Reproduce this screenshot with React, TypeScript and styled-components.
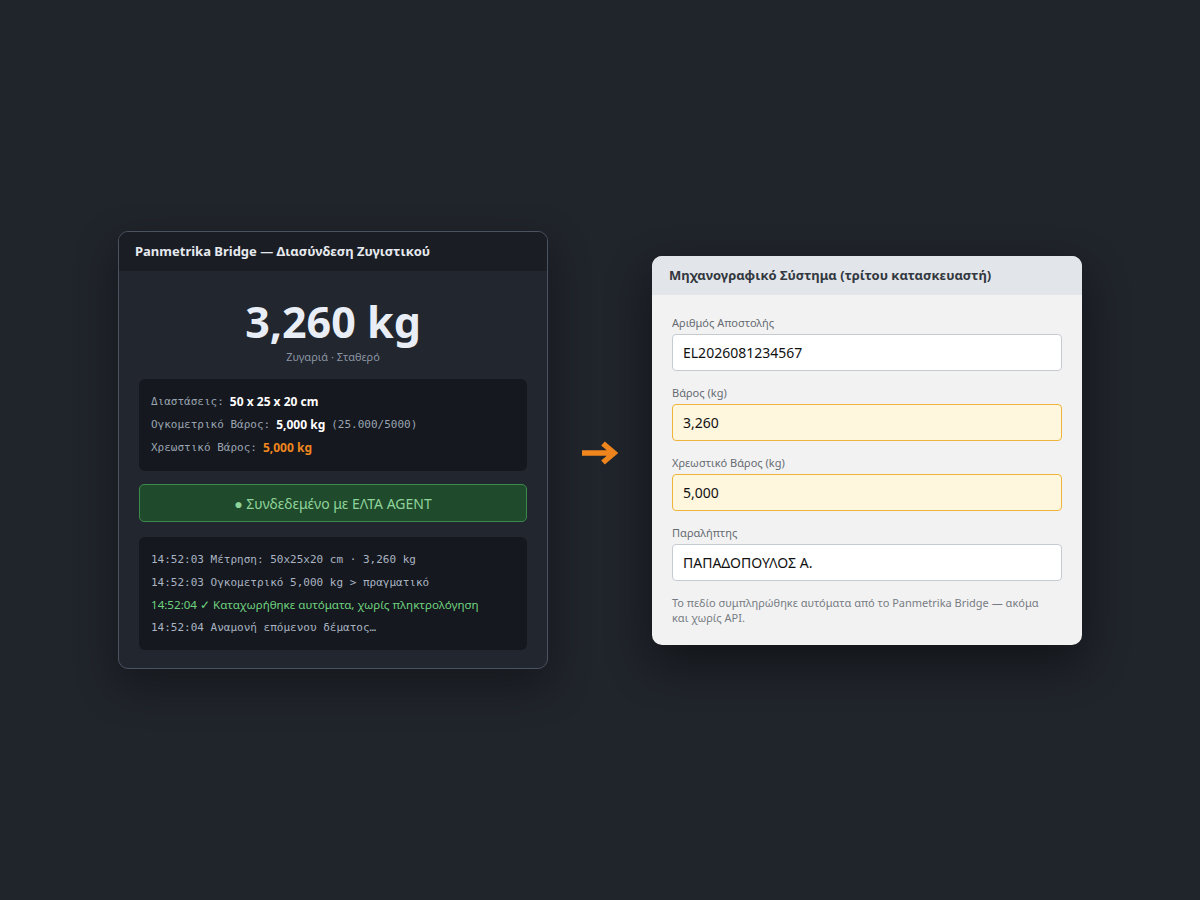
import React from "react";
import styled, { createGlobalStyle } from "styled-components";

const GlobalStyle = createGlobalStyle`
  html, body {
    margin: 0;
    padding: 0;
    background: #20242b;
  }
  body {
    font-family: "Noto Sans", "Open Sans", sans-serif;
  }
`;

type Field = {
  label: string;
  value: string;
  filled?: boolean;
};

const fields: Field[] = [
  { label: "Αριθμός Αποστολής", value: "EL2026081234567" },
  { label: "Βάρος (kg)", value: "3,260", filled: true },
  { label: "Χρεωστικό Βάρος (kg)", value: "5,000", filled: true },
  { label: "Παραλήπτης", value: "ΠΑΠΑΔΟΠΟΥΛΟΣ Α." },
];

function App() {
  return (
    <>
      <GlobalStyle />
      <Page>
        <BridgeCard>
          <BridgeHeader>Panmetrika Bridge — Διασύνδεση Ζυγιστικού</BridgeHeader>
          <BridgeBody>
            <Reading>
              <Weight>3,260 kg</Weight>
              <ReadingSub>Ζυγαριά · Σταθερό</ReadingSub>
            </Reading>

            <DarkBox>
              <InfoLine>
                Διαστάσεις:<Strong>50 x 25 x 20 cm</Strong>
              </InfoLine>
              <InfoLine>
                Ογκομετρικό Βάρος:<Strong>5,000 kg</Strong>(25.000/5000)
              </InfoLine>
              <InfoLine>
                Χρεωστικό Βάρος:<Strong $accent>5,000 kg</Strong>
              </InfoLine>
            </DarkBox>

            <Connected>● Συνδεδεμένο με ΕΛΤΑ AGENT</Connected>

            <DarkBox>
              <LogLine>14:52:03 Μέτρηση: 50x25x20 cm · 3,260 kg</LogLine>
              <LogLine>14:52:03 Ογκομετρικό 5,000 kg &gt; πραγματικό</LogLine>
              <LogLine $ok>14:52:04 ✓ Καταχωρήθηκε αυτόματα, χωρίς πληκτρολόγηση</LogLine>
              <LogLine>14:52:04 Αναμονή επόμενου δέματος…</LogLine>
            </DarkBox>
          </BridgeBody>
        </BridgeCard>

        <Arrow viewBox="0 0 36 24" aria-hidden="true">
          <path
            d="M0 12 H32 M21 2.5 L32 12 L21 21.5"
            fill="none"
            stroke="#f0861e"
            strokeWidth="5.5"
            strokeLinecap="butt"
            strokeLinejoin="miter"
          />
        </Arrow>

        <ErpCard>
          <ErpHeader>Μηχανογραφικό Σύστημα (τρίτου κατασκευαστή)</ErpHeader>
          <ErpBody>
            {fields.map((f) => (
              <FieldGroup key={f.label}>
                <Label>{f.label}</Label>
                <Input $filled={f.filled}>{f.value}</Input>
              </FieldGroup>
            ))}
            <Note>
              Το πεδίο συμπληρώθηκε αυτόματα από το Panmetrika Bridge — ακόμα
              και χωρίς API.
            </Note>
          </ErpBody>
        </ErpCard>
      </Page>
    </>
  );
}

export default App;

const Page = styled.div`
  width: 1200px;
  height: 900px;
  display: flex;
  align-items: center;
  justify-content: center;
  gap: 34px;
`;

const BridgeCard = styled.div`
  width: 430px;
  box-sizing: border-box;
  border: 1px solid #4b5261;
  border-radius: 10px;
  background: #22262e;
  overflow: hidden;
  box-shadow: 0 16px 40px rgba(0, 0, 0, 0.35);
`;

const BridgeHeader = styled.div`
  height: 39px;
  display: flex;
  align-items: center;
  padding: 0 16px;
  background: #1a1d24;
  color: #e6e9ee;
  font-size: 13px;
  font-weight: 700;
`;

const BridgeBody = styled.div`
  padding: 20px 20px 18px;
  display: flex;
  flex-direction: column;
  gap: 13px;
`;

const Reading = styled.div`
  display: flex;
  flex-direction: column;
  align-items: center;
  padding-top: 5px;
  margin-bottom: 2px;
`;

const Weight = styled.div`
  color: #e9eef6;
  font-size: 43px;
  font-weight: 700;
  line-height: 1.2;
`;

const ReadingSub = styled.div`
  color: #8a94a3;
  font-size: 11px;
  margin-top: 2px;
`;

const DarkBox = styled.div`
  background: #15181e;
  border-radius: 6px;
  padding: 11px 12px 12px;
  display: flex;
  flex-direction: column;
`;

const InfoLine = styled.div`
  height: 23px;
  display: flex;
  align-items: center;
  gap: 6px;
  font-family: "DejaVu Sans Mono", "Liberation Mono", monospace;
  font-size: 11px;
  color: #9aa4b2;
  white-space: nowrap;
`;

const Strong = styled.b<{ $accent?: boolean }>`
  font-family: "Noto Sans", "Open Sans", sans-serif;
  font-size: 12px;
  font-weight: 700;
  color: ${(p) => (p.$accent ? "#f0861e" : "#ffffff")};
`;

const Connected = styled.div`
  height: 38px;
  box-sizing: border-box;
  border: 1px solid #3b8a4c;
  border-radius: 5px;
  background: #1f4a2b;
  color: #8fd49a;
  font-size: 14px;
  display: flex;
  align-items: center;
  justify-content: center;
  margin-bottom: 2px;
`;

const LogLine = styled.div<{ $ok?: boolean }>`
  height: 22.5px;
  display: flex;
  align-items: center;
  font-family: ${(p) =>
    p.$ok ? `"Noto Sans", "Open Sans", sans-serif` : `"DejaVu Sans Mono", "Liberation Mono", monospace`};
  font-size: ${(p) => (p.$ok ? "11.6px" : "11px")};
  color: ${(p) => (p.$ok ? "#6fd27f" : "#aab4c3")};
  white-space: pre;
`;

const Arrow = styled.svg`
  width: 36px;
  height: 24px;
  flex-shrink: 0;
  margin-top: 5px;
`;

const ErpCard = styled.div`
  width: 430px;
  border-radius: 10px;
  background: #f2f2f2;
  overflow: hidden;
  box-shadow: 0 18px 45px rgba(0, 0, 0, 0.45);
`;

const ErpHeader = styled.div`
  height: 39px;
  display: flex;
  align-items: center;
  padding: 0 17px;
  background: #e2e5e9;
  color: #333840;
  font-size: 13px;
  font-weight: 700;
`;

const ErpBody = styled.div`
  padding: 20px 20px 20px;
  display: flex;
  flex-direction: column;
  gap: 14px;
`;

const FieldGroup = styled.div`
  display: flex;
  flex-direction: column;
  gap: 4px;
`;

const Label = styled.div`
  font-size: 11px;
  color: #666b73;
  line-height: 15px;
`;

const Input = styled.div<{ $filled?: boolean }>`
  height: 37px;
  box-sizing: border-box;
  border: 1px solid ${(p) => (p.$filled ? "#f0b43c" : "#c6cad1")};
  border-radius: 4px;
  background: ${(p) => (p.$filled ? "#fff6de" : "#ffffff")};
  padding: 0 10px;
  display: flex;
  align-items: center;
  font-size: 14px;
  color: #111;
`;

const Note = styled.div`
  max-width: 372px;
  font-size: 11px;
  line-height: 15px;
  color: #777c84;
`;
